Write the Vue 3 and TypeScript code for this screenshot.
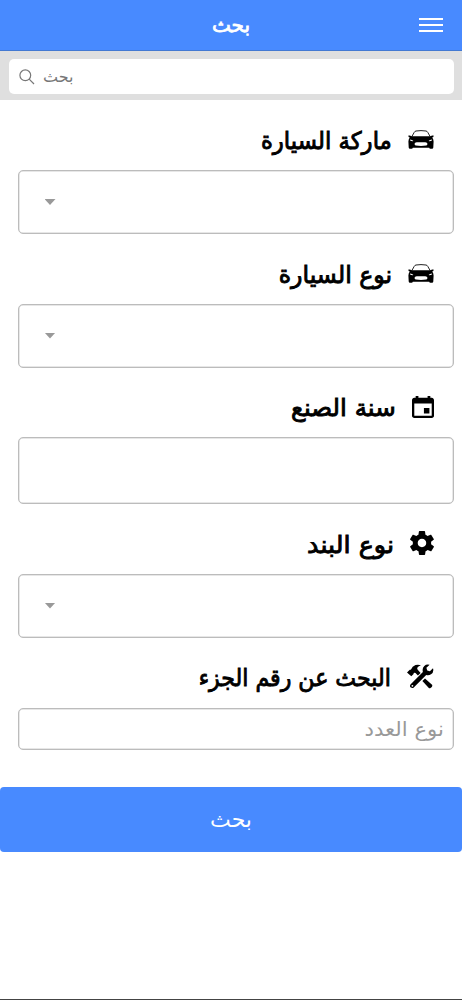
<script setup lang="ts">
type Icon = 'car' | 'calendar' | 'gear' | 'tools'
interface Field {
  label: string
  icon: Icon
  kind: 'select' | 'date' | 'text'
  placeholder?: string
}

const fields: Field[] = [
  { label: 'ماركة السيارة', icon: 'car', kind: 'select' },
  { label: 'نوع السيارة', icon: 'car', kind: 'select' },
  { label: 'سنة الصنع', icon: 'calendar', kind: 'date' },
  { label: 'نوع البند', icon: 'gear', kind: 'select' },
  { label: 'البحث عن رقم الجزء', icon: 'tools', kind: 'text', placeholder: 'نوع العدد' },
]
</script>

<template>
  <div class="page" dir="rtl">
    <header class="toolbar">
      <h1 class="title"><span>بحث</span></h1>
      <div class="menu"><i /><i /><i /></div>
    </header>

    <div class="searchbar">
      <div class="searchbox">
        <span class="search-text">بحث</span>
        <svg class="search-icon" viewBox="0 0 16 16">
          <circle cx="6.3" cy="6.3" r="5.4" />
          <path d="M10.2 10.2L15 15" />
        </svg>
      </div>
    </div>

    <main>
      <section v-for="(f, i) in fields" :key="i" :class="['group', 'group-' + (i + 1)]">
        <div class="label">
          <svg v-if="f.icon === 'car'" class="icon car" viewBox="0 0 26 20">
            <path class="roof" d="M3.6 7L6.2 2.4Q6.8 1.2 8 1Q13 .2 18 1Q19.2 1.2 19.8 2.4L22.4 7" />
            <path fill-rule="evenodd" d="M.4 5.6Q2.2 5 3.4 6.2H22.6Q23.8 5 25.6 5.6L25.4 7L24.2 7.4Q25.5 8.8 25.6 11.5L25.3 17.5Q25.2 18.8 24 18.8H22.4Q21.3 18.8 21.2 17.8H4.8Q4.7 18.8 3.6 18.8H2Q.8 18.8 .7 17.5L.4 11.5Q.5 8.8 1.8 7.4L.6 7ZM1.9 9.6L2.4 10.8Q4 11.4 5.4 11.1Q4.4 9.9 1.9 9.6ZM24.1 9.6Q21.6 9.9 20.6 11.1Q22 11.4 23.6 10.8ZM6.6 13.4Q6.4 15.2 7.8 15.6Q13 16.3 18.2 15.6Q19.6 15.2 19.4 13.4Q18.6 12.4 17 12.3H9Q7.4 12.4 6.6 13.4Z" />
          </svg>
          <svg v-else-if="f.icon === 'calendar'" class="icon calendar" viewBox="64 64 384 384">
            <path d="M368 272h-96v96h96v-96zM336 64v32H176V64h-48v32h-24c-22 0-40 18-40 40v272c0 22 18 40 40 40h304c22 0 40-18 40-40V136c0-22-18-40-40-40h-24V64h-48zm72 344H104V196h304v212z" />
          </svg>
          <svg v-else-if="f.icon === 'gear'" class="icon gear" viewBox="47 47 418 418">
            <path d="M413.967 276.8c1.06-6.235 1.06-13.518 1.06-20.8s-1.06-13.518-1.06-20.8l44.667-34.318c4.26-3.118 5.319-8.317 2.13-13.518L418.215 115.6c-2.129-4.164-8.507-6.235-12.767-4.164l-53.186 20.801c-10.638-8.318-23.394-15.601-36.16-20.801l-7.448-55.117c-1.06-4.154-5.319-8.318-10.638-8.318h-85.098c-5.318 0-9.577 4.164-10.637 8.318l-8.508 55.117c-12.767 5.2-24.464 12.482-36.171 20.801l-53.186-20.801c-5.319-2.071-10.638 0-12.767 4.164L49.1 187.365c-2.119 4.153-1.061 10.399 2.129 13.518L96.97 235.2c0 7.282-1.06 13.518-1.06 20.8s1.06 13.518 1.06 20.8l-44.668 34.318c-4.26 3.118-5.318 8.317-2.13 13.518L92.721 396.4c2.13 4.164 8.508 6.235 12.767 4.164l53.187-20.801c10.637 8.318 23.394 15.601 36.16 20.801l8.508 55.117c1.069 5.2 5.318 8.318 10.637 8.318h85.098c5.319 0 9.578-4.164 10.638-8.318l8.518-55.117c12.757-5.2 24.464-12.482 36.16-20.801l53.187 20.801c5.318 2.071 10.637 0 12.767-4.164l42.549-71.765c2.129-4.153 1.06-10.399-2.13-13.518l-46.8-34.317zm-158.499 52c-41.489 0-74.46-32.235-74.46-72.8s32.971-72.8 74.46-72.8 74.461 32.235 74.461 72.8-32.972 72.8-74.461 72.8z" />
          </svg>
          <svg v-else class="icon tools" viewBox="0 0 27 25">
            <path d="M0 8.6L2.8 5.8Q3.4 6 4 5.4Q5.2 2.2 8.5 1Q11.6.1 14 1.4Q10.3 2.2 10.2 4.6Q10.3 5.4 11.4 6.5L13.6 8.9L10.9 11.6L8.5 9.1Q7.5 8.3 6.7 9L6.6 9.9L4.3 12.2Z" />
            <path d="M18 14.4L25 20.8Q25.8 21.8 24.8 22.9L23.5 24Q22.5 24.7 21.6 23.8L15.4 17Z" />
            <path fill-rule="evenodd" d="M22.6.8L19.4 3.8L20.2 6.5L22.9 7.2L26 4.2Q27.2 8.2 24 10.3Q21.8 11.6 19.2 10.9L7 23.2Q5.6 24.7 3.9 23.6Q2.2 22.1 3.7 20.2L15.9 8Q14.9 4.3 17.3 1.9Q19.5-.1 22.6.8ZM5.4 20.9A.9.9 0 1 0 5.4 22.7A.9.9 0 1 0 5.4 20.9Z" />
          </svg>
          <span class="label-text">{{ f.label }}</span>
        </div>
        <div :class="['field', f.kind]">
          <span v-if="f.placeholder" class="placeholder">{{ f.placeholder }}</span>
          <i v-if="f.kind === 'select'" class="arrow" />
        </div>
      </section>
      <button class="submit" type="button"><span>بحث</span></button>
    </main>
  </div>
</template>

<style>
body {
  margin: 0;
  background: #fff;
}
</style>

<style scoped>
.page {
  display: flex;
  flex-direction: column;
  box-sizing: border-box;
  width: 100%;
  height: 1000px;
  overflow: hidden;
  background: #fff;
  border-bottom: 1px solid #444;
  font-family: "DejaVu Sans", sans-serif;
}
.toolbar {
  display: grid;
  grid-template-columns: 62px 1fr 62px;
  align-items: center;
  box-sizing: border-box;
  height: 51px;
  background: #488aff;
  border-bottom: 1px solid #4379d2;
}
.title {
  grid-column: 2;
  grid-row: 1;
  margin: 0;
  font-size: 20px;
  font-weight: 400;
  line-height: 30px;
  text-align: center;
  color: #fff;
  -webkit-text-stroke: 0.8px #fff;
}
.title span,
.submit span {
  display: inline-block;
}
.menu {
  grid-column: 1;
  grid-row: 1;
  display: flex;
  flex-direction: column;
  gap: 4px;
  width: 24px;
  margin-right: 19px;
}
.menu i {
  height: 2px;
  background: #fff;
}
.searchbar {
  box-sizing: border-box;
  height: 49px;
  padding: 8px 8px 6px 9px;
  background: #dfdfdf;
}
.searchbox {
  display: flex;
  align-items: center;
  justify-content: flex-end;
  gap: 8px;
  height: 35px;
  padding-left: 18px;
  border-radius: 5px;
  background: #fff;
}
.search-text {
  font-size: 16px;
  line-height: 30px;
  color: #777;
}
.search-icon {
  width: 16px;
  height: 16px;
  margin-left: -8px;
  fill: none;
  stroke: #777;
  stroke-width: 1.2;
}
.label {
  display: flex;
  align-items: center;
  box-sizing: border-box;
  height: 69.5px;
  padding-right: 28px;
  padding-top: 10px;
}
.group-1 .label,
.group-5 .label {
  height: 70px;
}
.group-5 .label {
  padding-top: 8px;
}
.icon {
  flex: none;
  display: block;
  fill: #000;
}
.car {
  width: 26px;
  height: 20px;
  margin-left: 16px;
}
.roof {
  fill: none;
  stroke: #222;
  stroke-width: 1;
}
.calendar {
  width: 22px;
  height: 22px;
  margin: -1px 0 0 16px;
}
.gear {
  width: 24px;
  height: 24px;
  margin: -2px 0 0 16px;
}
.tools {
  width: 27px;
  height: 25px;
  margin-left: 16px;
}
.label-text {
  padding-top: 2px;
  font-size: 24px;
  font-weight: 400;
  line-height: 36px;
  color: #000;
  white-space: nowrap;
  -webkit-text-stroke: 0.9px #000;
  transform-origin: right center;
}
.group-1 .label-text {
  transform: scaleX(0.95);
}
.group-2 .label-text {
  transform: scaleX(0.985);
}
.group-3 .label-text {
  transform: scaleX(1.02);
}
.group-4 .label-text {
  transform: scaleX(1.06);
}
.group-5 .label-text {
  transform: scaleX(0.92);
}
.field {
  display: flex;
  align-items: center;
  box-sizing: border-box;
  height: 64px;
  margin: 0 8.5px 0 17.5px;
  border: 1px solid #bcbcbc;
  border-radius: 5px;
  box-shadow: inset 0 0 0 0.5px #d0d0d0;
}
.date {
  height: 67px;
}
.text {
  height: 42.5px;
  padding-right: 9px;
}
.select {
  justify-content: flex-end;
}
.arrow {
  width: 11px;
  height: 6px;
  margin-left: 26px;
  background: #999;
  clip-path: polygon(0 0, 100% 0, 50% 100%);
}
.placeholder {
  font-size: 20px;
  line-height: 30px;
  color: #999;
  transform: scaleX(1.06);
  transform-origin: right center;
}
.submit {
  display: block;
  width: 100%;
  height: 64.5px;
  margin: 37px 0 0;
  padding: 0;
  border: 0;
  border-radius: 4px;
  background: #488aff;
  font-family: inherit;
  font-size: 22px;
  color: #fff;
}
</style>
